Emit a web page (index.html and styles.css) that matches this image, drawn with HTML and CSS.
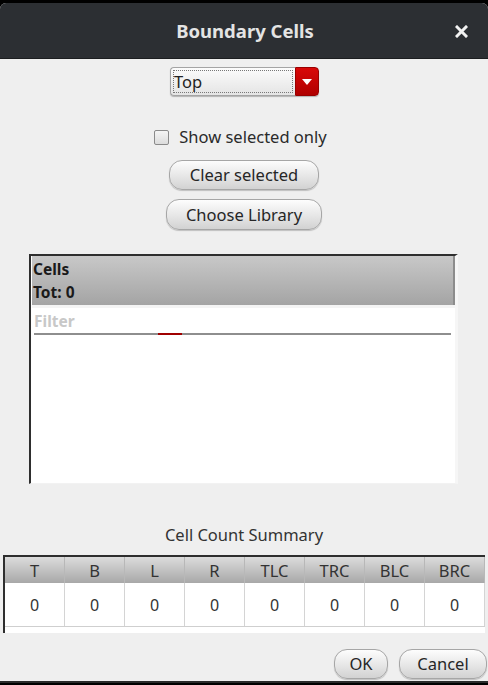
FILE: index.html
```html
<!DOCTYPE html>
<html>
<head>
<meta charset="utf-8">
<link rel="stylesheet" href="styles.css">
</head>
<body>
<div class="window">
  <div class="titlebar">
    <span class="title">Boundary Cells</span>
    <span class="close"><svg width="13" height="13" viewBox="0 0 13 13"><path d="M2 2 L11 11 M11 2 L2 11" stroke="#f2f2f2" stroke-width="3" stroke-linecap="square"/></svg></span>
  </div>
  <div class="content">
    <div class="combo">
      <div class="combo-field"><span class="combo-text">Top</span></div>
      <div class="combo-btn"><svg width="10" height="6" viewBox="0 0 10 6"><path d="M0 0 L10 0 L5 6 Z" fill="#fff"/></svg></div>
    </div>
    <label class="check-row"><span class="checkbox"></span><span>Show selected only</span></label>
    <button class="btn btn-clear">Clear selected</button>
    <button class="btn btn-lib">Choose Library</button>
    <div class="listbox">
      <div class="list-header">
        <div>Cells</div>
        <div>Tot: 0</div>
      </div>
      <div class="filter">
        <span class="filter-text">Filter</span>
      </div>
      <div class="filter-line"><span class="filter-red"></span></div>
      <div class="list-body"></div>
    </div>
    <div class="summary-title">Cell Count Summary</div>
    <div class="table">
      <div class="row head">
        <div class="cell">T</div><div class="cell">B</div><div class="cell">L</div><div class="cell">R</div><div class="cell">TLC</div><div class="cell">TRC</div><div class="cell">BLC</div><div class="cell">BRC</div>
      </div>
      <div class="row data">
        <div class="cell">0</div><div class="cell">0</div><div class="cell">0</div><div class="cell">0</div><div class="cell">0</div><div class="cell">0</div><div class="cell">0</div><div class="cell">0</div>
      </div>
      <div class="table-foot"></div>
    </div>
    <div class="actions">
      <button class="btn btn-ok">OK</button>
      <button class="btn btn-cancel">Cancel</button>
    </div>
  </div>
</div>
</body>
</html>
```
FILE: styles.css
```css
* { box-sizing: border-box; }
html, body {
  margin: 0;
  padding: 0;
  background: #000;
  width: 488px;
  height: 685px;
  overflow: hidden;
  font-family: "Noto Sans", "Open Sans", sans-serif;
}
.window {
  margin-top: 3px;
  height: 680px;
  background: #efefef;
  border-radius: 6px 6px 0 0;
  border-bottom: 2px solid #2a2a2a;
  display: flex;
  flex-direction: column;
  overflow: hidden;
}
.titlebar {
  height: 56px;
  background: #2c2f33;
  border-bottom: 1px solid #1c1e20;
  display: flex;
  align-items: center;
  justify-content: center;
  position: relative;
  flex: none;
}
.title {
  color: #e4e4e4;
  font-weight: bold;
  font-size: 18.5px;
  margin-top: -1px;
  margin-left: 2px;
}
.close {
  position: absolute;
  left: 455px;
  top: 22px;
  width: 13px;
  height: 13px;
  display: flex;
}
.content {
  flex: 1;
  display: flex;
  flex-direction: column;
  align-items: center;
  position: relative;
}
.combo {
  margin-top: 8px;
  width: 149px;
  height: 29px;
  display: flex;
  border-radius: 4px;
  box-shadow: 0 1px 1px rgba(0,0,0,0.25);
  margin-left: 1px;
}
.combo-field {
  flex: 1;
  background: linear-gradient(#fcfcfc, #e4e4e4);
  border: 1px solid #a4a4a4;
  border-right: none;
  border-radius: 4px 0 0 4px;
  padding: 2px;
  display: flex;
}
.combo-text {
  flex: 1;
  border: 1px dotted #777;
  font-size: 16.5px;
  color: #222;
  line-height: 22px;
  padding-left: 0;
}
.combo-btn {
  width: 24px;
  background: linear-gradient(#d80808, #b00000);
  border: 1px solid #900;
  border-radius: 0 4px 4px 0;
  display: flex;
  align-items: center;
  justify-content: center;
}
.check-row {
  margin-top: 30px;
  height: 22px;
  line-height: 22px;
  display: flex;
  align-items: center;
  font-size: 16.5px;
  color: #2a2a2a;
  margin-left: -7px;
}
.checkbox {
  width: 15px;
  height: 15px;
  border: 1px solid #8a8a8a;
  border-radius: 2px;
  background: linear-gradient(#f4f4f4, #dcdcdc);
  margin-right: 10px;
}
.btn {
  font-family: "Noto Sans", "Open Sans", sans-serif;
  font-size: 16.5px;
  color: #262626;
  background: linear-gradient(#fdfdfd, #e6e6e6 55%, #d2d2d2);
  border: 1px solid #a6a6a6;
  border-radius: 13px;
  padding: 0;
  box-shadow: 0 1px 1px rgba(0,0,0,0.2);
  line-height: 20px;
}
.btn-clear {
  margin-top: 12px;
  width: 150px;
  height: 30px;
}
.btn-lib {
  margin-top: 9px;
  width: 156px;
  height: 31px;
}
.listbox {
  margin-top: 24px;
  width: 429px;
  height: 230px;
  margin-left: -1px;
  background: #fff;
  border-top: 2px solid #2e2e2e;
  border-left: 2px solid #2e2e2e;
  border-right: 3px solid #f6f6f6;
  border-bottom: 1px solid #f2f2f2;
  display: flex;
  flex-direction: column;
  padding: 0 0 0 1px;
}
.list-header {
  height: 49px;
  flex: none;
  background: linear-gradient(#c8c8c8, #a4a4a4);
  border-right: 2px solid #8c8c8c;
  font-weight: bold;
  font-size: 15.5px;
  color: #1a1a1a;
  padding: 0 0 0 1px;
  line-height: 23px;
  display: flex;
  flex-direction: column;
  justify-content: center;
}
.filter {
  flex: none;
  padding-left: 2px;
  display: flex;
  align-items: center;
  border-top: 3px solid #f4f4f4;
  height: 28px;
}
.filter-text {
  color: #c8c8c8;
  font-weight: bold;
  font-size: 15.5px;
}
.filter-line {
  flex: none;
  height: 2px;
  margin: 0 4px 0 2px;
  background: #8e8e8e;
  position: relative;
}
.filter-red {
  position: absolute;
  left: 124px;
  top: 0;
  width: 24px;
  height: 2px;
  background: #a00000;
}
.list-body {
  flex: 1;
}
.summary-title {
  margin-top: 40px;
  font-size: 16.5px;
  color: #333;
  line-height: 22px;
}
.table {
  margin-top: 9px;
  align-self: flex-start;
  margin-left: 3px;
  width: 482px;
  background: #fff;
  border-top: 2px solid #2e2e2e;
  border-left: 2px solid #2e2e2e;
}
.row {
  display: grid;
  grid-template-columns: repeat(8, 60px);
}
.row.head {
  height: 26px;
  background: linear-gradient(#dcdcdc, #a8a8a8);
}
.row.head .cell {
  border-right: 1px solid #b8b8b8;
  color: #333;
  font-size: 16.5px;
  display: flex;
  align-items: center;
  justify-content: center;
}
.row.data {
  height: 44px;
  border-bottom: 1px solid #cfcfcf;
}
.row.data .cell {
  border-right: 1px solid #d4d4d4;
  color: #333;
  font-size: 16px;
  display: flex;
  align-items: center;
  justify-content: center;
}
.table-foot {
  height: 6px;
}
.actions {
  margin-top: 16px;
  align-self: flex-end;
  display: flex;
  gap: 11px;
  margin-right: 1px;
}
.btn-ok {
  width: 54px;
  height: 30px;
}
.btn-cancel {
  width: 88px;
  height: 30px;
}
```
